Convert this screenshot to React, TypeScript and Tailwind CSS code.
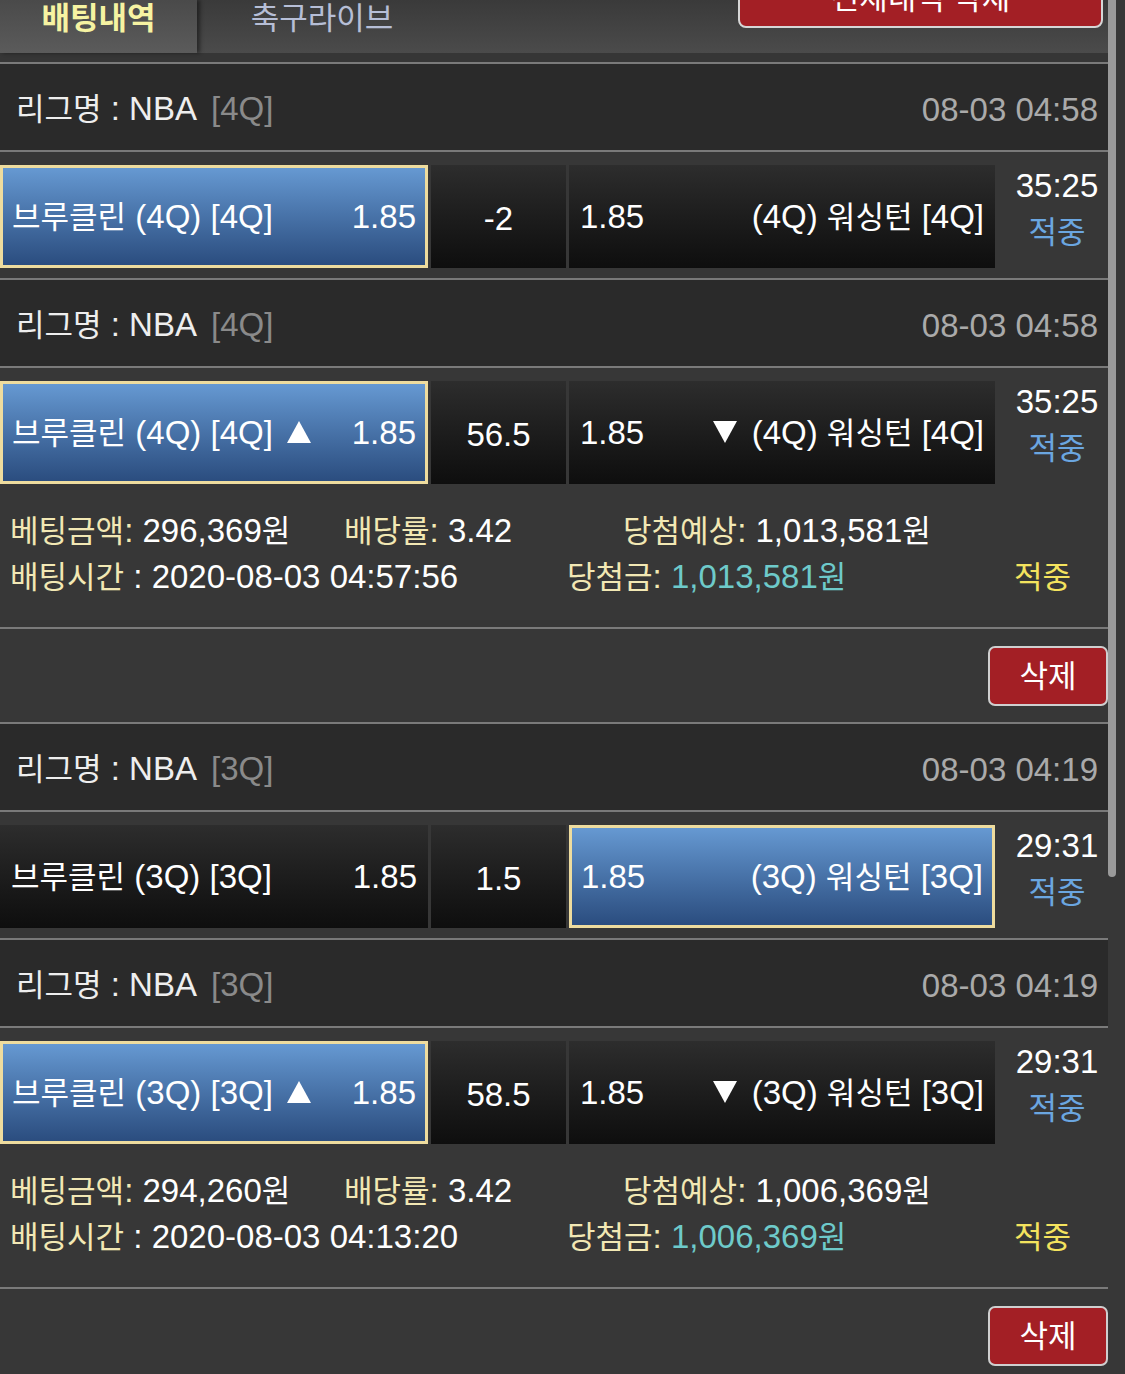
import clsx from "clsx";

type Bet = {
  quarter: string;
  date: string;
  home: string;
  homeOdd: string;
  line: string;
  awayOdd: string;
  away: string;
  pick: "home" | "away";
  arrows?: boolean;
  clock: string;
};

type Slip = {
  bets: Bet[];
  amount: string;
  rate: string;
  expected: string;
  placedAt: string;
  payout: string;
};

const slips: Slip[] = [
  {
    bets: [
      { quarter: "[4Q]", date: "08-03 04:58", home: "브루클린 (4Q) [4Q]", homeOdd: "1.85", line: "-2", awayOdd: "1.85", away: "(4Q) 워싱턴 [4Q]", pick: "home", clock: "35:25" },
      { quarter: "[4Q]", date: "08-03 04:58", home: "브루클린 (4Q) [4Q]", homeOdd: "1.85", line: "56.5", awayOdd: "1.85", away: "(4Q) 워싱턴 [4Q]", pick: "home", arrows: true, clock: "35:25" },
    ],
    amount: "296,369원",
    rate: "3.42",
    expected: "1,013,581원",
    placedAt: "2020-08-03 04:57:56",
    payout: "1,013,581원",
  },
  {
    bets: [
      { quarter: "[3Q]", date: "08-03 04:19", home: "브루클린 (3Q) [3Q]", homeOdd: "1.85", line: "1.5", awayOdd: "1.85", away: "(3Q) 워싱턴 [3Q]", pick: "away", clock: "29:31" },
      { quarter: "[3Q]", date: "08-03 04:19", home: "브루클린 (3Q) [3Q]", homeOdd: "1.85", line: "58.5", awayOdd: "1.85", away: "(3Q) 워싱턴 [3Q]", pick: "home", arrows: true, clock: "29:31" },
    ],
    amount: "294,260원",
    rate: "3.42",
    expected: "1,006,369원",
    placedAt: "2020-08-03 04:13:20",
    payout: "1,006,369원",
  },
];

// hangul runs get a slightly smaller size so they sit like the iOS font next to the digits
function T({ children }: { children: string }) {
  return (
    <span>
      {children.split(/([\uAC00-\uD7A3]+)/).map((part, i) =>
        /[\uAC00-\uD7A3]/.test(part) ? (
          <span key={i} className="text-[0.94em]">
            {part}
          </span>
        ) : (
          part
        ),
      )}
    </span>
  );
}

function Arrow({ down }: { down?: boolean }) {
  return (
    <svg width="24" height="22" viewBox="0 0 24 22" className="fill-white">
      {down ? <polygon points="0,0 24,0 12,22" /> : <polygon points="12,0 24,22 0,22" />}
    </svg>
  );
}

function Cell({ active, className, children }: { active: boolean; className?: string; children: React.ReactNode }) {
  return (
    <div
      className={clsx(
        "flex items-center justify-between",
        active
          ? "border-[3px] border-[#eedc9e] bg-gradient-to-b from-[#6699d2] to-[#2b4d7f] px-[9px]"
          : "bg-gradient-to-b from-[#2d2d2d] to-[#0e0e0e] px-[11px]",
        className,
      )}
    >
      {children}
    </div>
  );
}

function BetBlock({ bet }: { bet: Bet }) {
  return (
    <>
      <div className="flex h-[88px] items-center justify-between border-t-2 border-[#7a7a7a] bg-[#2a2a2a] pl-[16px] pr-[10px] pt-[4px] text-[33px] leading-none">
        <p>
          <span className="text-[#eeeeee]">
            <T>리그명 : NBA</T>
          </span>
          <span className="ml-[14px] text-[#8a8a8a]">{bet.quarter}</span>
        </p>
        <p className="text-[#aaaaaa]">{bet.date}</p>
      </div>
      <div className="flex h-[128px] gap-[3px] border-t-2 border-[#7a7a7a] pb-[10px] pt-[13px] text-[33px] leading-none text-white">
        <Cell active={bet.pick === "home"} className="w-[428px]">
          <span className="flex items-center gap-[14px]">
            <T>{bet.home}</T>
            {bet.arrows && <Arrow />}
          </span>
          <span>{bet.homeOdd}</span>
        </Cell>
        <div className="flex w-[135px] items-center justify-center bg-gradient-to-b from-[#2d2d2d] to-[#0e0e0e] pt-[4px]">{bet.line}</div>
        <Cell active={bet.pick === "away"} className="w-[426px]">
          <span>{bet.awayOdd}</span>
          <span className="flex items-center gap-[15px]">
            {bet.arrows && <Arrow down />}
            <T>{bet.away}</T>
          </span>
        </Cell>
        <div className="-mt-[2px] flex flex-1 flex-col items-center pl-[8px] leading-[46px]">
          <span>{bet.clock}</span>
          <span className="text-[#6ba6e0]">
            <T>적중</T>
          </span>
        </div>
      </div>
    </>
  );
}

function Label({ children }: { children: string }) {
  return (
    <span className="text-[#f2e8b4]">
      <T>{children}</T>
    </span>
  );
}

function SlipGroup({ slip }: { slip: Slip }) {
  return (
    <>
      {slip.bets.map((bet, i) => (
        <BetBlock key={i} bet={bet} />
      ))}
      <div className="h-[133px] pb-[30px] pl-[10px] pt-[14px] text-[33px] leading-[45px] text-white">
        <div className="flex">
          <p className="w-[334px]">
            <Label>베팅금액:</Label> <T>{slip.amount}</T>
          </p>
          <p className="w-[279px]">
            <Label>배당률:</Label> {slip.rate}
          </p>
          <p>
            <Label>당첨예상:</Label> <T>{slip.expected}</T>
          </p>
        </div>
        <div className="flex">
          <p className="w-[557px]">
            <Label>배팅시간</Label> : {slip.placedAt}
          </p>
          <p className="w-[447px]">
            <Label>당첨금:</Label>{" "}
            <span className="text-[#6ecaca]">
              <T>{slip.payout}</T>
            </span>
          </p>
          <p className="text-[#f4e35e]">
            <T>적중</T>
          </p>
        </div>
      </div>
      <div className="flex h-[95px] justify-end border-t-2 border-[#7a7a7a] pt-[17px]">
        <button className="h-[60px] w-[120px] rounded-[7px] border-2 border-[#cfcfcf] bg-[#a31f25] text-[31px] leading-none text-white">삭제</button>
      </div>
    </>
  );
}

export default function App() {
  return (
    <div className="flex h-[1374px] w-[1125px] overflow-hidden bg-[#373737] font-[family-name:'Liberation_Sans','Noto_Sans_CJK_KR',sans-serif]">
      <main className="w-[1108px] shrink-0">
        <div className="flex h-[53px] bg-gradient-to-b from-[#3a3a3a] to-[#4b4b4b]">
          <div className="flex w-[197px] justify-center bg-gradient-to-b from-[#4a4a4a] to-[#5b5b5b] shadow-[3px_0_4px_rgba(0,0,0,0.45)]">
            <span className="mt-[1px] text-[31px] font-bold leading-[36px] text-[#f6f3a2]">배팅내역</span>
          </div>
          <div className="flex w-[250px] justify-center">
            <span className="mt-[1px] text-[31px] leading-[36px] text-[#b6bed6]">축구라이브</span>
          </div>
          <button className="ml-auto mr-[5px] -mt-[32px] h-[60px] w-[365px] rounded-[8px] border-2 border-[#d6d6d6] bg-[#a31f25] text-[31px] leading-none text-white">
            전체내역 삭제
          </button>
        </div>
        <div className="h-[9px] bg-[#363636]" />
        {slips.map((slip, i) => (
          <SlipGroup key={i} slip={slip} />
        ))}
      </main>
      <div className="w-[17px]">
        <div className="h-[877px] w-[8px] rounded-b-full bg-[#9a9a9a]" />
      </div>
    </div>
  );
}
